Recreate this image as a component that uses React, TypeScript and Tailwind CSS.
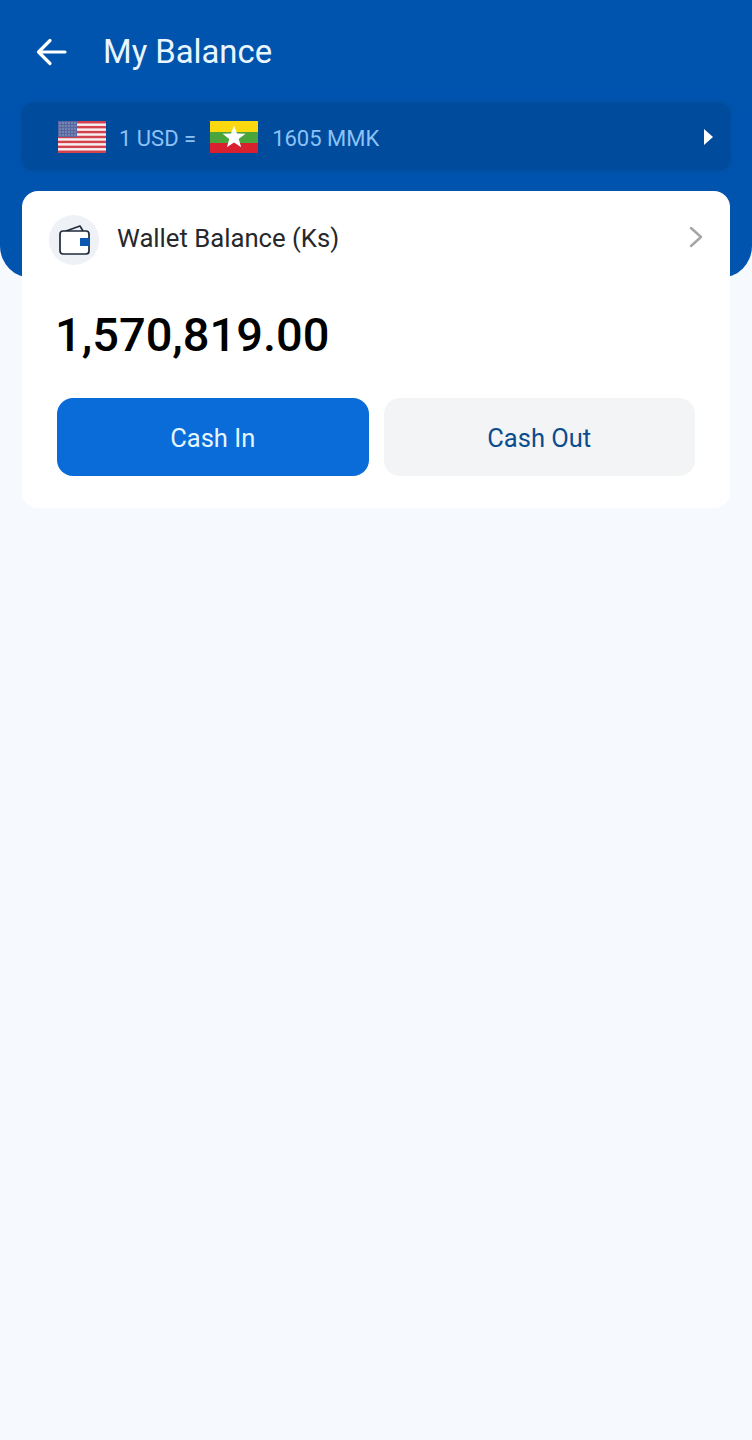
import React from 'react';

function UsFlag() {
  const stripes = [0, 2, 4, 6, 8, 10, 12];
  const dotRows = [2, 5, 8, 11, 14];
  const dotCols = [2, 5, 8, 11, 14, 17];
  return (
    <svg width="48" height="32" viewBox="0 0 48 32" className="shrink-0">
      <rect width="48" height="32" fill="#f6f1f1" />
      {stripes.map((s) => (
        <rect key={s} x="0" y={s * 2.46} width="48" height="2.46" fill="#d2414c" />
      ))}
      <rect width="19" height="16" fill="#56689f" />
      {dotRows.map((r) =>
        dotCols.map((c) => <circle key={`${r}-${c}`} cx={c} cy={r} r="0.7" fill="#aab4d4" />)
      )}
    </svg>
  );
}

function MmFlag() {
  return (
    <svg width="48" height="32" viewBox="0 0 48 32" className="shrink-0">
      <rect width="48" height="11" fill="#fcd80f" />
      <rect y="11" width="48" height="11" fill="#4aa63c" />
      <rect y="22" width="48" height="10" fill="#d8202f" />
      <polygon points="24,4.5 27,12.6 35.5,12.8 28.7,18 31.2,26.3 24,21.4 16.8,26.3 19.3,18 12.5,12.8 21,12.6" fill="#ffffff" />
    </svg>
  );
}

function WalletIcon() {
  return (
    <svg width="32" height="32" viewBox="0 0 32 32" fill="none" className="shrink-0">
      <path d="M8 7 L22 2 L25 7" stroke="#1f2a3c" strokeWidth="1.6" strokeLinejoin="round" strokeLinecap="round" />
      <rect x="2" y="7" width="29" height="23" rx="3" stroke="#1f2a3c" strokeWidth="1.7" fill="#ffffff" />
      <rect x="22" y="14" width="9" height="8" fill="#0b57b0" />
    </svg>
  );
}

export default function App() {
  return (
    <div className="min-h-[1440px] bg-[#f6f9fd] font-['Roboto',sans-serif]">
      {/* Header */}
      <div className="h-[278px] bg-[#0054ae] rounded-b-[32px] pt-[26px] px-[22px]">
        <div className="flex items-center h-[52px]">
          <svg width="32" height="32" viewBox="0 0 32 32" fill="none" className="ml-[14px]">
            <path d="M2.5 16 H29 M14 4.5 L2.5 16 L14 27.5" stroke="#ffffff" strokeWidth="3.2" strokeLinecap="round" strokeLinejoin="round" />
          </svg>
          <span className="ml-[35px] text-[32.8px] text-[#eaf6ff] leading-none">My Balance</span>
        </div>

        {/* Rate bar */}
        <div className="mt-[25px] h-[67px] rounded-[10px] bg-[#004b9c] shadow-[0_0_6px_#004b9c] flex items-center pl-[36px] pr-[17px]">
          <UsFlag />
          <span className="ml-[13px] mt-[3px] text-[22px] text-[#8cc2f7]">1 USD =</span>
          <div className="ml-[14px]">
            <MmFlag />
          </div>
          <span className="ml-[14px] mt-[3px] text-[22px] text-[#8cc2f7]">1605 MMK</span>
          <svg width="10" height="16" viewBox="0 0 10 16" className="ml-auto">
            <polygon points="1,0 10,8 1,16" fill="#ffffff" />
          </svg>
        </div>
      </div>

      {/* Wallet card */}
      <div className="mx-[22px] -mt-[87px] h-[317px] bg-white rounded-[16px] relative">
        <div className="flex items-center pt-[24px] pl-[27px] pr-[27px]">
          <div className="w-[50px] h-[50px] rounded-full bg-[#eef1f5] flex items-center justify-center">
            <WalletIcon />
          </div>
          <span className="ml-[18px] -mt-[3px] text-[25.7px] text-[#26282c]">Wallet Balance (Ks)</span>
          <svg width="14" height="22" viewBox="0 0 14 22" fill="none" className="ml-auto -mt-[6px]">
            <path d="M2 2 L12 11 L2 20" stroke="#a3a5a8" strokeWidth="2.4" strokeLinecap="round" strokeLinejoin="round" />
          </svg>
        </div>

        <div className="mt-[40px] ml-[33px] text-[47px] leading-[60px] font-medium text-black">1,570,819.00</div>

        <div className="mt-[33px] px-[35px] grid grid-cols-2 gap-[15px]">
          <button className="h-[78px] pt-[2px] rounded-[16px] bg-[#0a6cd8] text-[25.5px] text-[#e4f6ff]">Cash In</button>
          <button className="h-[78px] pt-[2px] rounded-[16px] bg-[#f2f4f5] text-[25.5px] text-[#0a4c8e]">Cash Out</button>
        </div>
      </div>
    </div>
  );
}
